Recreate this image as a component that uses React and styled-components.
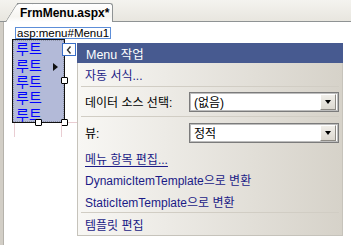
import React from 'react';
import styled, { createGlobalStyle } from 'styled-components';

// Menu control items shown on the design surface
const menuItems = ['루트', '루트', '루트', '루트', '루트'];

const GlobalStyle = createGlobalStyle`
  html, body {
    margin: 0;
    padding: 0;
    background: #fff;
    overflow: hidden;
  }
  body {
    font-family: "Liberation Sans", "Noto Sans CJK KR", sans-serif;
    font-size: 12px;
  }
`;

const Window = styled.div`
  width: 351px;
  height: 245px;
  display: flex;
  flex-direction: column;
  overflow: hidden;
`;

const TabStrip = styled.div`
  height: 22px;
  box-sizing: border-box;
  display: flex;
  align-items: flex-end;
  padding-left: 17px;
  background: linear-gradient(#f4f3ef, #e8e6df);
  border-bottom: 1px solid #8f9394;
`;

const Tab = styled.div`
  position: relative;
  z-index: 0;
  height: 19px;
  box-sizing: border-box;
  margin-bottom: -1px;
  padding: 0 3px 0 3px;
  display: flex;
  align-items: center;
  background: linear-gradient(#ffffff, #f6f5f1 70%, #fff);
  border: 1px solid #8f9394;
  border-left: none;
  border-bottom: none;
  border-top-right-radius: 3px;
  font-weight: bold;
  font-size: 12px;
  color: #000;

  &::before {
    content: "";
    position: absolute;
    z-index: -1;
    top: -1px;
    bottom: 0;
    left: -12px;
    width: 16px;
    background: linear-gradient(#ffffff, #f6f5f1 70%, #fff);
    border-left: 1px solid #8f9394;
    border-top: 1px solid #8f9394;
    border-top-left-radius: 3px;
    transform: skewX(-32deg);
    transform-origin: bottom left;
  }
`;

const Surface = styled.div`
  flex: 1;
  position: relative;
  background: #fff;
  border-left: 3px solid #d2cec6;
  box-shadow: inset 1px 0 #b5b2ab;
  padding: 5px 0 0 9px;
  display: flex;
  flex-direction: column;
  align-items: flex-start;
`;

const TagLabel = styled.div`
  margin-left: 3px;
  height: 12px;
  box-sizing: border-box;
  border: 1px solid #5d8ed8;
  padding: 0 1px;
  font-size: 11.5px;
  line-height: 10px;
  color: #000;
`;

const MenuBox = styled.div`
  position: relative;
  width: 53px;
  height: 84px;
  box-sizing: border-box;
  border: 1px solid #111;
  background: #b3bad8;
  outline: 1px dotted #8e93a8;
  outline-offset: -2px;
  display: flex;
  flex-direction: column;
`;

const MenuItem = styled.div`
  height: 16.4px;
  display: flex;
  align-items: center;
  justify-content: space-between;
  padding: 0 6px 0 3px;
  font-family: "Noto Sans CJK KR", sans-serif;
  font-size: 14px;
  line-height: 16px;
  color: #0000ff;
`;

const SubArrow = styled.span`
  width: 0;
  height: 0;
  margin-top: 4px;
  border-left: 5px solid #111;
  border-top: 4px solid transparent;
  border-bottom: 4px solid transparent;
`;

const Handle = styled.span`
  position: absolute;
  width: 7px;
  height: 7px;
  box-sizing: border-box;
  border: 1px solid #000;
  border-radius: 1px;
  background: #fff;
  ${p => p.$pos === 'right' && 'right: -4px; top: calc(50% - 4px);'}
  ${p => p.$pos === 'bottom' && 'bottom: -4px; left: calc(50% - 4px);'}
  ${p => p.$pos === 'corner' && 'right: -4px; bottom: -4px;'}
`;

const Guide = styled.span`
  position: absolute;
  background: #e9cdd2;
  ${p => p.$vertical
    ? `width: 1px; height: 14px; top: 101px; left: ${p.$at}px;`
    : `height: 1px; width: 9px; top: 100px; left: ${p.$at}px;`}
`;

const SmartTag = styled.div`
  position: absolute;
  left: 59px;
  top: 21px;
  width: 14px;
  height: 13px;
  box-sizing: border-box;
  border: 1px solid #3a6fc9;
  background: #fff;
  display: flex;
  align-items: center;
  justify-content: center;
`;

const Panel = styled.div`
  position: absolute;
  left: 74px;
  top: 21px;
  width: 266px;
  height: 193px;
  box-sizing: border-box;
  border: 1px solid #c6c3bb;
  border-top: none;
  background: linear-gradient(to right, #f8f7f4, #d6d2c9);
  display: flex;
  flex-direction: column;
  font-size: 12px;
`;

const PanelHeader = styled.div`
  height: 20px;
  flex: none;
  margin: 0 -1px;
  background: #475a90;
  color: #fff;
  padding-left: 9px;
  display: flex;
  align-items: center;
  font-size: 12.5px;
`;

const Row = styled.div`
  height: ${p => p.$h}px;
  flex: none;
  display: flex;
  align-items: center;
  padding-left: 7px;
  color: ${p => (p.$link ? '#1b1b86' : '#000')};
  text-decoration: ${p => (p.$underline ? 'underline' : 'none')};
  text-underline-offset: 2px;
  white-space: nowrap;
`;

const Separator = styled.div`
  height: 1px;
  flex: none;
  margin: 0 3px;
  background: #d1cdc4;
`;

const FieldLabel = styled.span`
  flex: 0 0 104px;
`;

const SelectBox = styled.div`
  width: 150px;
  height: 20px;
  box-sizing: border-box;
  border: 1px solid #7b7b7b;
  box-shadow: inset 0 0 0 1px #bdbdbd;
  background: #fff;
  display: flex;
  align-items: center;
  padding: 2px;
`;

const SelectValue = styled.span`
  flex: 1;
  padding-left: 2px;
  color: #000;
`;

const DropButton = styled.span`
  width: 16px;
  height: 16px;
  box-sizing: border-box;
  background: linear-gradient(#f1efea, #dcd8d0);
  border: 1px solid;
  border-color: #fff #8d8a84 #8d8a84 #fff;
  display: flex;
  align-items: center;
  justify-content: center;

  &::after {
    content: "";
    border-top: 4px solid #000;
    border-left: 3.5px solid transparent;
    border-right: 3.5px solid transparent;
  }
`;

const Select = ({ value }) => (
  <SelectBox>
    <SelectValue>{value}</SelectValue>
    <DropButton />
  </SelectBox>
);

const App = () => (
  <Window>
    <GlobalStyle />
    <TabStrip>
      <Tab>FrmMenu.aspx*</Tab>
    </TabStrip>

    <Surface>
      <TagLabel>asp:menu#Menu1</TagLabel>
      <MenuBox>
        {menuItems.map((label, i) => (
          <MenuItem key={i}>
            {label}
            {i === 1 && <SubArrow />}
          </MenuItem>
        ))}
        <Handle $pos="right" />
        <Handle $pos="bottom" />
        <Handle $pos="corner" />
      </MenuBox>

      {/* 디자인 화면의 여백 가이드 */}
      <Guide $vertical $at={11} />
      <Guide $vertical $at={58} />
      <Guide $at={65} />

      <SmartTag>
        <svg width="6" height="8" viewBox="0 0 6 8">
          <polyline points="4.5,0.5 1.5,4 4.5,7.5" fill="none" stroke="#333" strokeWidth="1.4" />
        </svg>
      </SmartTag>

      <Panel>
        <PanelHeader>Menu 작업</PanelHeader>
        <Row $h={23} $link>자동 서식...</Row>
        <Separator />
        <Row $h={29}>
          <FieldLabel>데이터 소스 선택:</FieldLabel>
          <Select value="(없음)" />
        </Row>
        <Separator />
        <Row $h={31}>
          <FieldLabel>뷰:</FieldLabel>
          <Select value="정적" />
        </Row>
        <Row $h={21} $link $underline>메뉴 항목 편집...</Row>
        <Row $h={21} $link>DynamicItemTemplate으로 변환</Row>
        <Row $h={22} $link>StaticItemTemplate으로 변환</Row>
        <Separator />
        <Row $h={22} $link>템플릿 편집</Row>
      </Panel>
    </Surface>
  </Window>
);

export default App;
